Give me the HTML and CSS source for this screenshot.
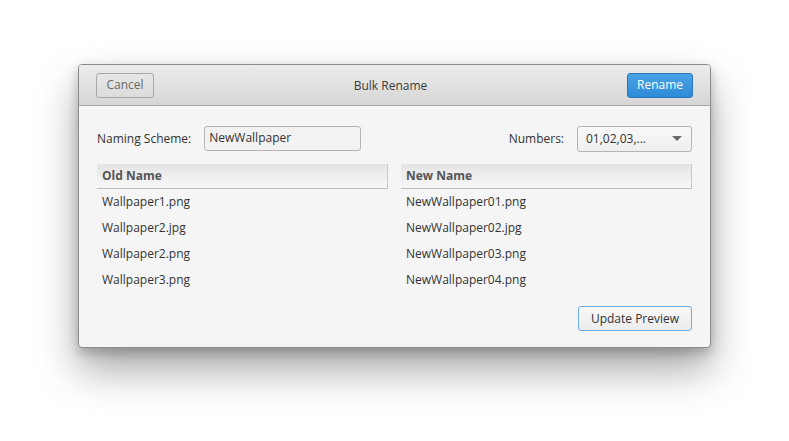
FILE: index.html
```html
<!DOCTYPE html>
<html>
<head>
<meta charset="utf-8">
<link rel="stylesheet" href="styles.css">
</head>
<body>
<div class="window">
  <div class="titlebar">
    <button class="btn">Cancel</button>
    <div class="title">Bulk Rename</div>
    <button class="btn btn-primary">Rename</button>
  </div>
  <div class="content">
    <div class="options">
      <label class="lbl">Naming Scheme:</label>
      <div class="entry">NewWallpaper</div>
      <div class="spacer"></div>
      <label class="lbl">Numbers:</label>
      <div class="combo"><span>01,02,03,...</span><span class="arrow"></span></div>
    </div>
    <div class="tables">
      <div class="col">
        <div class="colhead">Old Name</div>
        <div class="row">Wallpaper1.png</div>
        <div class="row">Wallpaper2.jpg</div>
        <div class="row">Wallpaper2.png</div>
        <div class="row">Wallpaper3.png</div>
      </div>
      <div class="col">
        <div class="colhead">New Name</div>
        <div class="row">NewWallpaper01.png</div>
        <div class="row">NewWallpaper02.jpg</div>
        <div class="row">NewWallpaper03.png</div>
        <div class="row">NewWallpaper04.png</div>
      </div>
    </div>
    <div class="actions">
      <button class="btn btn-outline">Update Preview</button>
    </div>
  </div>
</div>
</body>
</html>
```

FILE: styles.css
```css
html, body {
  margin: 0;
  padding: 0;
  background: #ffffff;
  font-family: "Open Sans", "DejaVu Sans", sans-serif;
  font-size: 12px;
  color: #333333;
}
body {
  padding: 64px 0 0 78px;
  min-height: 441px;
  box-sizing: border-box;
}
.window {
  width: 631px;
  height: 282px;
  border: 1px solid #8c8c8c;
  border-radius: 4px;
  background: #f5f5f5;
  box-shadow: 0 22px 40px rgba(0, 0, 0, 0.34), 0 5px 12px rgba(0, 0, 0, 0.22);
  overflow: hidden;
  display: flex;
  flex-direction: column;
}
.titlebar {
  height: 40px;
  border-bottom: 1px solid #a6a6a6;
  background: linear-gradient(#ececec, #d6d6d6);
  display: flex;
  align-items: center;
  padding: 0 17px;
}
.title {
  flex: 1;
  text-align: center;
  color: #3a3a3a;
}
.btn {
  font-family: inherit;
  font-size: 12px;
  height: 25px;
  padding: 0 10px;
  border-radius: 3px;
  border: 1px solid #a8a8a8;
  background: linear-gradient(#e6e6e6, #dcdcdc);
  color: #6a6a6a;
  box-sizing: border-box;
  line-height: 22px;
}
.titlebar .btn:first-child {
  width: 58px;
  padding: 0;
}
.btn-primary {
  width: 66px;
  padding: 0;
  border-color: #2b78c0;
  background: linear-gradient(#4aa3e6, #2e8bd6);
  color: #ffffff;
}
.content {
  flex: 1;
  padding: 20px 18px 0 18px;
  display: flex;
  flex-direction: column;
}
.options {
  display: flex;
  align-items: center;
  height: 25px;
}
.lbl {
  color: #333333;
}
.entry {
  margin-left: 13px;
  width: 157px;
  height: 25px;
  box-sizing: border-box;
  border: 1px solid #b4b4b4;
  border-radius: 3px;
  background: #f2f2f2;
  padding: 0 4px;
  line-height: 22px;
  color: #333;
}
.spacer { flex: 1; }
.combo {
  margin-left: 13px;
  width: 115px;
  height: 26px;
  box-sizing: border-box;
  border: 1px solid #b4b4b4;
  border-radius: 3px;
  background: linear-gradient(#f8f8f8, #efefef);
  display: flex;
  align-items: center;
  justify-content: space-between;
  padding: 0 9px 1px 8px;
  color: #333;
}
.arrow {
  width: 0;
  height: 0;
  border-left: 5px solid transparent;
  border-right: 5px solid transparent;
  border-top: 5px solid #6a6a6a;
}
.tables {
  margin-top: 13px;
  display: flex;
  gap: 13px;
}
.col {
  flex: 1;
}
.colhead {
  height: 24px;
  border-bottom: 1px solid #bdbdbd;
  border-right: 1px solid #c8c8c8;
  background: linear-gradient(#e4e4e4, #f8f8f8);
  font-weight: bold;
  color: #555555;
  padding-left: 5px;
  line-height: 23px;
}
.row {
  height: 26px;
  line-height: 25px;
  padding-left: 5px;
  color: #333333;
}
.actions {
  margin-top: 13px;
  display: flex;
  justify-content: flex-end;
}
.btn-outline {
  width: 114px;
  padding: 0;
  border-color: #6aaee6;
  background: linear-gradient(#f8f8f8, #ececec);
  color: #333333;
}
```
